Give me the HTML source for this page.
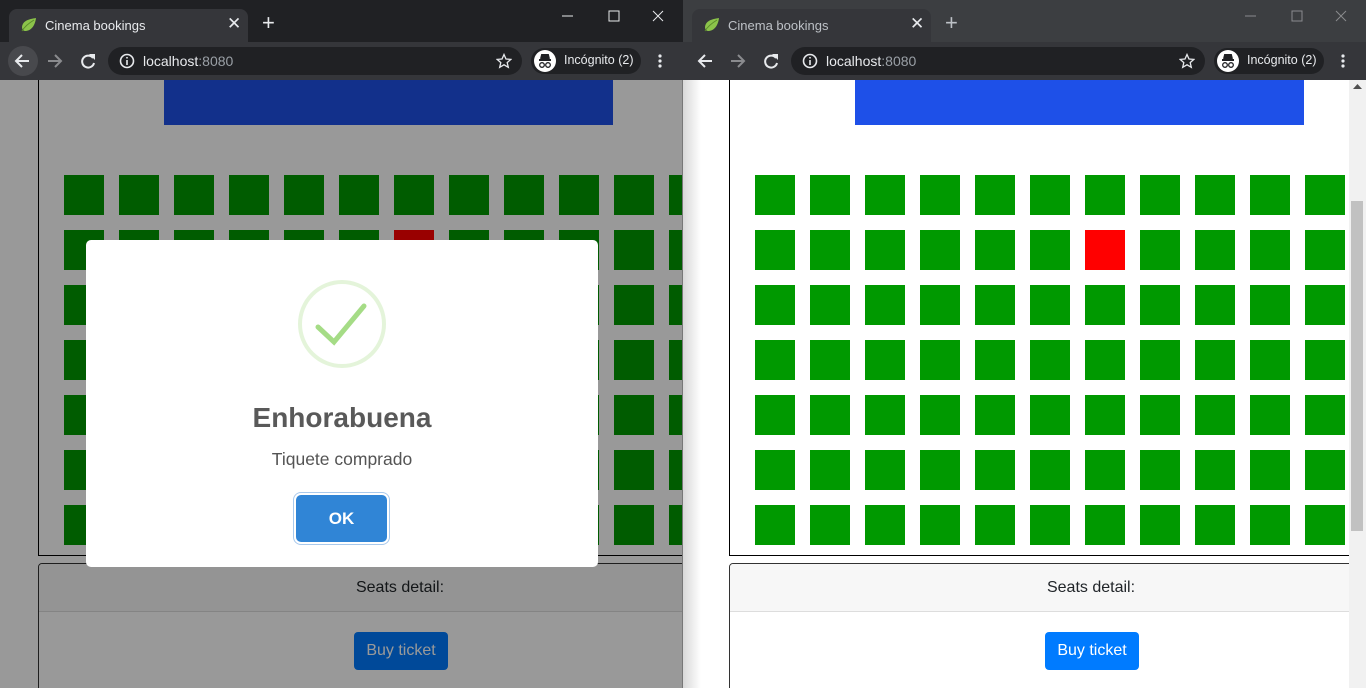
<!DOCTYPE html>
<html><head><meta charset="utf-8"><style>
*{margin:0;padding:0;box-sizing:border-box}
html,body{width:1366px;height:688px;overflow:hidden}
body{font-family:"Liberation Sans",sans-serif;background:#fff;position:relative}
.win{position:absolute;top:0;width:683px;height:688px;overflow:hidden}
.tb{position:absolute;left:0;top:0;width:683px;height:42px}
.tab{position:absolute;left:9px;top:9px;width:239px;height:33px;background:#35363a;border-radius:8px 8px 0 0}
.tab .t{position:absolute;left:36px;top:9px;font-size:13px;color:#e8eaed}
.tab .x{position:absolute;left:218px;top:5px;font-size:17px;color:#e8eaed}
.plus{position:absolute;left:262px;top:12px;font-size:22px;color:#e8eaed;line-height:22px}
.tool{position:absolute;left:0;top:42px;width:683px;height:38px;background:#35363a}
.omni{position:absolute;left:108px;top:5px;width:414px;height:28px;background:#202124;border-radius:14px}
.omni .u{position:absolute;left:35px;top:6px;font-size:14px;color:#e8eaed}
.omni .u span{color:#9aa0a6}
.inc{position:absolute;left:531px;top:6px;width:110px;height:26px;background:#202124;border-radius:13px}
.inc .av{position:absolute;left:3px;top:2px;width:22px;height:22px;border-radius:50%;background:#fff}
.inc .tx{position:absolute;left:33px;top:5px;font-size:12.5px;color:#e8eaed}
.page{position:absolute;top:80px;width:675px;height:608px;background:#fff;overflow:hidden}
.seatbox{position:absolute;left:38px;top:-20px;width:1000px;height:496px;border-left:1px solid #000;border-bottom:1px solid #000}
.screen{position:absolute;left:164px;top:0;width:449px;height:45px;background:#1e50e8}
.seat{position:absolute;width:40px;height:40px;background:#009900}
.card{position:absolute;left:38px;top:483px;width:724px;height:140px;border:1px solid #333;border-radius:4px;overflow:hidden}
.ch{height:48px;background:#f7f7f7;border-bottom:1px solid #ddd;text-align:center;font-size:16px;line-height:47px;color:#212529}
.btn{position:absolute;left:315px;top:68px;width:94px;height:38px;background:#007bff;border-radius:4px;color:#fff;font-size:16px;text-align:center;line-height:38px}
.ov{position:absolute;left:0;top:80px;width:683px;height:608px;background:rgba(0,0,0,.4)}
.modal{position:absolute;left:86px;top:240px;width:512px;height:327px;background:#fff;border-radius:5px;text-align:center}
.ring{position:absolute;left:212px;top:40px;width:88px;height:88px;border:4px solid rgba(165,220,134,.3);border-radius:50%}
.mt{position:absolute;left:0;top:162px;width:100%;font-size:28px;font-weight:bold;color:#595959}
.ms{position:absolute;left:0;top:209px;width:100%;font-size:17.5px;color:#545454}
.ok{position:absolute;left:210px;top:255px;width:91px;height:47px;border-radius:5px;background:#3085d6;box-shadow:0 0 0 2px #fff,0 0 0 3px #a9c9ec;color:#fff;font-weight:bold;font-size:17px;line-height:47px}
.sb{position:absolute;left:666px;top:80px;width:17px;height:608px;background:#f1f1f1}
.sb .th{position:absolute;left:2px;top:121px;width:12px;height:330px;background:#c1c1c1}
</style></head><body>

<div class="win" style="left:0">
 <div class="tb" style="background:#202124"></div>
 <div class="tab">
  <svg style="position:absolute;left:12px;top:9px" width="16" height="14" viewBox="0 0 16 14"><path d="M15 0C9 1 2 2 1 9c0 2 1 4 3 4 6 0 10-5 11-13z" fill="#8bc34a"/><path d="M1 13C4 8 8 5 13 2" stroke="#5a8a2a" stroke-width="1" fill="none"/></svg>
  <div class="t">Cinema bookings</div><div class="x">✕</div>
 </div>
 <div class="plus">+</div>
 <svg style="position:absolute;left:560px;top:8px" width="110" height="16"><path d="M2 8h11" stroke="#e8eaed"/><rect x="49" y="3" width="10" height="10" fill="none" stroke="#e8eaed"/><path d="M93 3l10 10M103 3l-10 10" stroke="#e8eaed"/></svg>
 <div class="tool">
  <div style="position:absolute;left:8px;top:4px;width:30px;height:30px;border-radius:50%;background:#48494d"></div>
  <svg style="position:absolute;left:13px;top:10px" width="90" height="18"><path d="M16 9H3M9 3L3 9l6 6" stroke="#e8eaed" stroke-width="2" fill="none"/><path d="M48 9H35M42 3l6 6-6 6" stroke="#8a8b8e" stroke-width="2" fill="none"/><path d="M80 6a6 6 0 1 0 1 5" stroke="#e8eaed" stroke-width="2" fill="none"/><path d="M76 2h6v6z" fill="#e8eaed"/></svg>
  <div class="omni">
   <svg style="position:absolute;left:11px;top:6px" width="16" height="16"><circle cx="8" cy="8" r="6.5" stroke="#e8eaed" stroke-width="1.6" fill="none"/><path d="M8 7v5M8 4v1.5" stroke="#e8eaed" stroke-width="1.6"/></svg>
   <div class="u">localhost<span>:8080</span></div>
   <svg style="position:absolute;left:388px;top:6px" width="16" height="16"><path d="M8 1.5l2 4.5 4.8.4-3.6 3.2 1.1 4.7L8 11.8l-4.3 2.5 1.1-4.7L1.2 6.4 6 6z" stroke="#e8eaed" stroke-width="1.3" fill="none"/></svg>
  </div>
  <div class="inc"><div class="av"><svg width="22" height="22"><path d="M5 10h12M7 9l1-4h6l1 4" stroke="#202124" stroke-width="2" fill="#202124"/><circle cx="8" cy="15" r="2.3" stroke="#202124" stroke-width="1.3" fill="none"/><circle cx="14" cy="15" r="2.3" stroke="#202124" stroke-width="1.3" fill="none"/></svg></div><div class="tx">Incógnito (2)</div></div>
  <svg style="position:absolute;left:656px;top:11px" width="8" height="16"><circle cx="4" cy="3" r="1.6" fill="#e8eaed"/><circle cx="4" cy="8" r="1.6" fill="#e8eaed"/><circle cx="4" cy="13" r="1.6" fill="#e8eaed"/></svg>
 </div>
 <div class="page" style="left:0;width:683px" id="pl">
  <div class="seatbox"></div><div class="screen"></div>
  <div class="card"><div class="ch">Seats detail:</div><div class="btn">Buy ticket</div></div>
 </div>
 <div class="ov"></div>
 <div style="position:absolute;left:682px;top:80px;width:1px;height:608px;background:#777"></div>
 <div class="modal">
  <div class="ring"></div>
  <svg style="position:absolute;left:212px;top:40px" width="88" height="88"><path d="M20 47l16 15 30-36" stroke="#a5dc86" stroke-width="5" stroke-linecap="round" fill="none"/></svg>
  <div class="mt">Enhorabuena</div>
  <div class="ms">Tiquete comprado</div>
  <div class="ok">OK</div>
 </div>
</div>

<div class="win" style="left:683px">
 <div class="tb" style="background:#3c3e41"></div>
 <div class="tab">
  <svg style="position:absolute;left:12px;top:9px" width="16" height="14" viewBox="0 0 16 14"><path d="M15 0C9 1 2 2 1 9c0 2 1 4 3 4 6 0 10-5 11-13z" fill="#8bc34a"/><path d="M1 13C4 8 8 5 13 2" stroke="#5a8a2a" stroke-width="1" fill="none"/></svg>
  <div class="t" style="color:#bdc1c6">Cinema bookings</div><div class="x">✕</div>
 </div>
 <div class="plus" style="color:#bdc1c6">+</div>
 <svg style="position:absolute;left:560px;top:8px" width="110" height="16"><path d="M2 8h11" stroke="#8a8b8e"/><rect x="49" y="3" width="10" height="10" fill="none" stroke="#8a8b8e"/><path d="M93 3l10 10M103 3l-10 10" stroke="#8a8b8e"/></svg>
 <div class="tool">
  <svg style="position:absolute;left:13px;top:10px" width="90" height="18"><path d="M16 9H3M9 3L3 9l6 6" stroke="#e8eaed" stroke-width="2" fill="none"/><path d="M48 9H35M42 3l6 6-6 6" stroke="#8a8b8e" stroke-width="2" fill="none"/><path d="M80 6a6 6 0 1 0 1 5" stroke="#e8eaed" stroke-width="2" fill="none"/><path d="M76 2h6v6z" fill="#e8eaed"/></svg>
  <div class="omni">
   <svg style="position:absolute;left:11px;top:6px" width="16" height="16"><circle cx="8" cy="8" r="6.5" stroke="#e8eaed" stroke-width="1.6" fill="none"/><path d="M8 7v5M8 4v1.5" stroke="#e8eaed" stroke-width="1.6"/></svg>
   <div class="u">localhost<span>:8080</span></div>
   <svg style="position:absolute;left:388px;top:6px" width="16" height="16"><path d="M8 1.5l2 4.5 4.8.4-3.6 3.2 1.1 4.7L8 11.8l-4.3 2.5 1.1-4.7L1.2 6.4 6 6z" stroke="#e8eaed" stroke-width="1.3" fill="none"/></svg>
  </div>
  <div class="inc"><div class="av"><svg width="22" height="22"><path d="M5 10h12M7 9l1-4h6l1 4" stroke="#202124" stroke-width="2" fill="#202124"/><circle cx="8" cy="15" r="2.3" stroke="#202124" stroke-width="1.3" fill="none"/><circle cx="14" cy="15" r="2.3" stroke="#202124" stroke-width="1.3" fill="none"/></svg></div><div class="tx">Incógnito (2)</div></div>
  <svg style="position:absolute;left:656px;top:11px" width="8" height="16"><circle cx="4" cy="3" r="1.6" fill="#e8eaed"/><circle cx="4" cy="8" r="1.6" fill="#e8eaed"/><circle cx="4" cy="13" r="1.6" fill="#e8eaed"/></svg>
 </div>
 <div class="page" style="left:8px;width:658px" id="pr">
  <div class="seatbox"></div><div class="screen"></div>
  <div class="card"><div class="ch">Seats detail:</div><div class="btn">Buy ticket</div></div>
 </div>
 <div style="position:absolute;left:0;top:80px;width:18px;height:608px;background:linear-gradient(90deg,#d8d8d8,#fff)"></div>
 <div class="sb"><div class="th"></div><svg style="position:absolute;left:4px;top:4px" width="9" height="6"><path d="M0 5l4.5-5 4.5 5z" fill="#505050"/></svg></div>
</div>

<script>
["pl","pr"].forEach(function(id){
 var p=document.getElementById(id),h="";
 for(var r=0;r<7;r++)for(var c=0;c<12;c++){
  var red=(r==1&&c==6);
  h+='<div class="seat" style="left:'+(64+55*c)+'px;top:'+(95+55*r)+'px'+(red?';background:#f00':'')+'"></div>';
 }
 p.insertAdjacentHTML("beforeend",h);
});
</script>
</body></html>
